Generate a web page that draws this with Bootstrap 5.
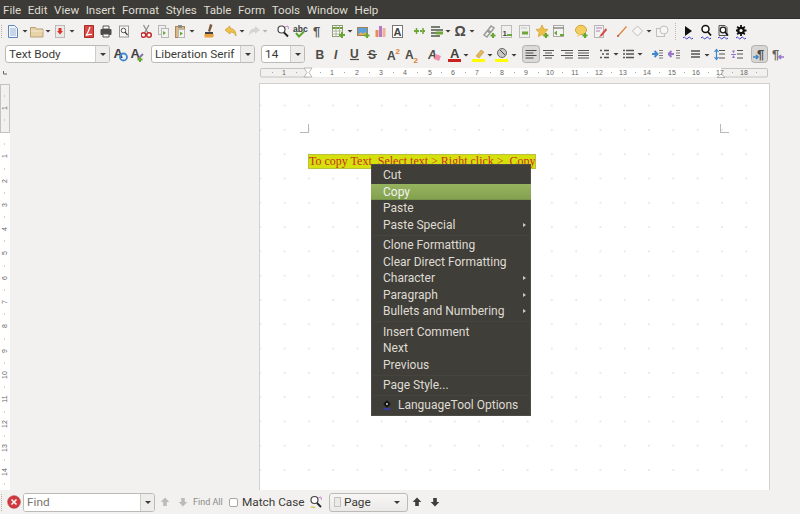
<!DOCTYPE html>
<html lang="en">
<head>
<meta charset="utf-8">
<title>Writer</title>
<link href="https://cdn.jsdelivr.net/npm/bootstrap@5.3.0/dist/css/bootstrap.min.css" rel="stylesheet">
<style>
html,body{margin:0;height:514px;overflow:hidden;background:#f2f1f0;font-family:Roboto,"Noto Sans",sans-serif;color:#3c3b37}
svg{display:block;flex:none}
svg text{font-family:"Liberation Sans",sans-serif}
.appbar{height:19px;background:#3c3b37;color:#dfdbd2;font-size:11.6px;line-height:20px;padding-left:3px;gap:6.6px;box-shadow:inset 0 -1px #2f2e2a}
.appbar span{display:block}
.tb1{height:25px}
.tb2{height:21px}
.tbi{display:flex;padding:0;border:0;background:none;border-radius:0}
.cmb{height:18px;margin-top:1px;border:1px solid #bcbab6;border-radius:3px;background:#fff;font-size:11.8px;line-height:16px;color:#3c3b37;flex:none;overflow:hidden}
.cmb-t{flex:1;padding-left:3px;white-space:nowrap}
.cmb-a{width:14px;background:#eeedeb;border-left:1px solid #cfcdc9;position:relative}
.cmb-a::after,.pgc-a::after{content:"";position:absolute;left:4px;top:7px;border:3px solid transparent;border-top:3px solid #3c3b37;border-bottom:0}
.w-style{width:105px;margin-left:5px}
.w-font{width:104px}
.w-size{width:44px;margin-left:6px}
.rulerrow{height:16px}
.work{height:409px;position:relative;overflow:hidden}
.vrul{margin-top:3px}
.sheet{position:relative;width:511px;height:408px;margin:2px 0 0 249px;background-color:#fff;border:1px solid #d3d1cd;border-bottom:0;background-image:radial-gradient(circle at 1px 1px,#e9e9e9 .7px,transparent 1px);background-size:24.3px 24.3px;background-position:23.6px 20.6px}
.crop{position:absolute;width:9px;height:9px;top:40px;border-bottom:1px solid #b8b8b8}
.crop-l{left:40px;border-right:1px solid #b8b8b8}
.crop-r{left:460px;border-left:1px solid #b8b8b8}
.doc-line{position:absolute;left:48px;top:70px;width:228px;height:15px;background:#d5e00c;border:1px solid #b9c23a;color:#c9301e;font:12px/13px "Liberation Serif",serif;white-space:pre;overflow:hidden}
.ctx.dropdown-menu{display:block;position:absolute;left:111px;top:80px;width:157px;height:252px;margin:0;padding:3px 0 0;border:0;border-radius:0;background:#3f3e39;box-shadow:0 0 0 1px #4e4d47 inset;font-size:12px;color:#dfdbd2}
.ctx .dropdown-item{height:16.6px;line-height:16px;padding:0 0 0 12px;color:#dfdbd2;position:relative;background:none;white-space:nowrap}
.ctx .dropdown-item.hot{background:linear-gradient(#96b35f,#82a14f);color:#f2f1f0;box-shadow:0 -1px #77934a inset}
.ctx .dropdown-divider{margin:1.3px 0;height:1px;border:0;background:#45443f;opacity:1}
.sub::after{content:"";position:absolute;right:5px;top:6px;border:2.5px solid transparent;border-left:3px solid #cfcbc2;border-right:0}
.lt{display:flex;align-items:center;gap:7px}
.cursor{position:absolute;left:163px;top:110px}
.findbar{height:24px;position:relative;font-size:11.8px;color:#3c3b37}
.fnd{width:132px;height:19px;margin:3px 0 0 0;border:1px solid #bcbab6;border-radius:3px;background:#fff;overflow:hidden;flex:none}
.fnd input.form-control{flex:1;min-width:0;height:17px;padding:0 0 0 3px;border:0;border-radius:0;font-size:11.8px;background:#fff;font-family:Roboto,sans-serif}
.fnd input::placeholder{color:#77756f;opacity:1}
.fnd .cmb-a{width:14px}
.fall{width:36px;font-size:9px;line-height:24px;color:#8c8a85;flex:none}
.chk.form-check-input{width:9px;height:9px;margin:8px 4px 0 0;border:1px solid #a8a6a2;border-radius:2px;flex:none}
.mc{width:68px;line-height:24px;flex:none}
.pgc{width:79px;height:19px;margin-top:3px;border:1px solid #bcbab6;border-radius:3px;background:linear-gradient(#f7f6f5,#ebeae8);position:relative;line-height:17px;padding-left:14px;flex:none}
.pgc-a{position:absolute;right:10px;top:0;width:0;height:17px}
.pgc-a::after{left:-3px}
.pgc i{position:absolute;left:4px;top:3px;width:7px;height:10px;background:#eceae6;border:1px solid #c4c2be}
</style>
</head>
<body>
<svg width="0" height="0" style="position:absolute"><defs><path id="ar" d="M-2.5 11h5l-2.5 2.6z" fill="#3c3b37"/><path id="arg" d="M-2.5 11h5l-2.5 2.6z" fill="#b5b3af"/></defs></svg>

<div class="appbar d-flex">
<span>File</span><span>Edit</span><span>View</span><span>Insert</span><span>Format</span><span>Styles</span><span>Table</span><span>Form</span><span>Tools</span><span>Window</span><span>Help</span>
</div>

<div class="tb1 d-flex">
<svg width="8" height="25" viewBox="0 0 8 25"><path d="M1.500 6v13" stroke="#b0aeaa" stroke-dasharray="1 1"/></svg>
<button class="btn tbi" aria-label="New"><svg width="22" height="25" viewBox="8 0 22 25"><path d="M8.500 6.500h6l3 3v9h-9z" fill="#f2f6fb" stroke="#5d86bb"/><path d="M10 10h6M10 12h6M10 14h6M10 16h6" stroke="#9db4d2"/><use href="#ar" x="25"/></svg></button>
<button class="btn tbi" aria-label="Open"><svg width="25" height="25" viewBox="30 0 25 25"><path d="M30.500 8.500h5l1 1.500h6.500v8h-12.500z" fill="#e7d3a8" stroke="#b9a374"/><path d="M31 12h12" stroke="#f3e8cf"/><use href="#ar" x="48"/></svg></button>
<button class="btn tbi" aria-label="Save"><svg width="29" height="25" viewBox="55 0 29 25"><rect x="55.500" y="6.500" width="9" height="12" fill="#eceae8" stroke="#bdbab6"/><path d="M58.500 9h3v3h1.500l-3 3.500-3-3.500h1.500z" fill="#d8322d"/><use href="#ar" x="72"/></svg></button>
<button class="btn tbi" aria-label="PDF"><svg width="16" height="25" viewBox="84 0 16 25"><path d="M84.500 6.500h9v12h-9z" fill="#d94a45" stroke="#a92c28"/><path d="M90 8c-1 3-2 6-4 8.500 2-1 4-1.500 6-1" fill="none" stroke="#fff" stroke-width="1.200"/></svg></button>
<button class="btn tbi" aria-label="Print"><svg width="19" height="25" viewBox="100 0 19 25"><path d="M103 7h6v3h-6z" fill="#fff" stroke="#555"/><rect x="100.500" y="10" width="11" height="6" rx="1" fill="#4a4a4a"/><path d="M103 15h6v3h-6z" fill="#fff" stroke="#555"/></svg></button>
<button class="btn tbi" aria-label="Preview"><svg width="22" height="25" viewBox="119 0 22 25"><rect x="119.500" y="7" width="9" height="11" fill="#f8f8f8" stroke="#9a9a9a"/><circle cx="123.500" cy="11.500" r="2.300" fill="none" stroke="#555"/><path d="M125 13l2.500 3" stroke="#444" stroke-width="1.300"/></svg></button>
<button class="btn tbi" aria-label="Cut"><svg width="17" height="25" viewBox="141 0 17 25"><path d="M143.500 6l4.500 8M149 6l-4.500 8" stroke="#8b8b8b" stroke-width="1.200"/><circle cx="143.500" cy="16" r="2.300" fill="#fff" stroke="#c02d2a" stroke-width="1.500"/><circle cx="149" cy="16" r="2.300" fill="#fff" stroke="#c02d2a" stroke-width="1.500"/></svg></button>
<button class="btn tbi" aria-label="Copy"><svg width="17" height="25" viewBox="158 0 17 25"><rect x="158.500" y="6.500" width="7" height="9" fill="#eee" stroke="#b8b8b4"/><rect x="161.500" y="9.500" width="7" height="9" fill="#f2f2f0" stroke="#b8b8b4"/><path d="M163 12v4l3-2z" fill="#6fa63a"/></svg></button>
<button class="btn tbi" aria-label="Paste"><svg width="28" height="25" viewBox="175 0 28 25"><rect x="175.500" y="7.500" width="9" height="11" fill="#d9b886" stroke="#a68a5c"/><rect x="178" y="6" width="4" height="3" fill="#8d8d88"/><rect x="178.500" y="10.500" width="6" height="8" fill="#f3f3f1" stroke="#b8b8b4"/><path d="M180 12.500v4l3-2z" fill="#6fa63a"/><use href="#ar" x="192"/></svg></button>
<button class="btn tbi" aria-label="Clone"><svg width="21" height="25" viewBox="203 0 21 25"><path d="M210 5l2.500 1-2.500 7-2-1z" fill="#7a5a36"/><path d="M205 13h8v2h-8z" fill="#444"/><path d="M204.500 15h9c.5 2-.5 3.500-1 3.500h-8z" fill="#e9a13b"/></svg></button>
<button class="btn tbi" aria-label="Undo"><svg width="24" height="25" viewBox="224 0 24 25"><path d="M225 11l5-4v2.600c4 0 6 2.400 6 7.400-1.500-3-3-4-6-4V15z" fill="#f0c24c" stroke="#c79a2c" stroke-width=".7"/><use href="#ar" x="242"/></svg></button>
<button class="btn tbi" aria-label="Redo"><svg width="29" height="25" viewBox="248 0 29 25"><path d="M260 11l-5-4v2.600c-4 0-6 2.400-6 7.400 1.500-3 3-4 6-4V15z" fill="#d5d4d1"/><use href="#arg" x="265"/></svg></button>
<button class="btn tbi" aria-label="Find"><svg width="16" height="25" viewBox="277 0 16 25"><circle cx="281.500" cy="10.500" r="3.500" fill="#fff" stroke="#444" stroke-width="1.200"/><path d="M284 13.500l4 4" stroke="#222" stroke-width="1.800"/><path d="M285 8l3-1 .5 3" stroke="#c98ad0" fill="none"/></svg></button>
<button class="btn tbi" aria-label="Spelling"><svg width="20" height="25" viewBox="293 0 20 25"><text x="293" y="12.500" font-size="8.500" font-weight="700" fill="#38403a">abc</text><path d="M296 14l3 3.500 5-5" fill="none" stroke="#5ea52e" stroke-width="2"/></svg></button>
<button class="btn tbi" aria-label="Marks"><svg width="19" height="25" viewBox="313 0 19 25"><text x="313" y="17" font-size="13" font-weight="700" fill="#55544f">¶</text></svg></button>
<button class="btn tbi" aria-label="Table"><svg width="25" height="25" viewBox="332 0 25 25"><rect x="332.500" y="6.500" width="10" height="11" fill="#fff" stroke="#8d9b78"/><path d="M332 9h11" stroke="#6d9c3a" stroke-width="2"/><path d="M336 7v11M339.500 7v11M332 12h11M332 15h11" stroke="#a9b49a"/><path d="M342 13v6M339 16h6" stroke="#66a632" stroke-width="2"/><use href="#ar" x="350"/></svg></button>
<button class="btn tbi" aria-label="Image"><svg width="18" height="25" viewBox="357 0 18 25"><rect x="357.500" y="8.500" width="10" height="8" fill="#5ca0dc" stroke="#a18150"/><path d="M358 16l3-3 2 2 2-2 2 3z" fill="#e8b24c"/><path d="M367 14v5M364.500 16.500h5" stroke="#66a632" stroke-width="2"/></svg></button>
<button class="btn tbi" aria-label="Chart"><svg width="17" height="25" viewBox="375 0 17 25"><rect x="375.500" y="11" width="3" height="7" fill="#e98b5b"/><rect x="379" y="7" width="3" height="11" fill="#b179c8"/><rect x="382.500" y="9" width="3" height="9" fill="#ecb39a"/></svg></button>
<button class="btn tbi" aria-label="Text box"><svg width="21" height="25" viewBox="392 0 21 25"><rect x="392.500" y="6.500" width="10" height="12" fill="#fff" stroke="#777"/><text x="393.500" y="16.500" font-size="11" font-weight="700" fill="#444">A</text></svg></button>
<button class="btn tbi" aria-label="Line"><svg width="18" height="25" viewBox="413 0 18 25"><path d="M414 12h12" stroke="#72a83f" stroke-width="2" stroke-dasharray="2 1"/><path d="M416.500 9v6M423 9v6" stroke="#66a632" stroke-width="1.500"/></svg></button>
<button class="btn tbi" aria-label="Field"><svg width="24" height="25" viewBox="431 0 24 25"><path d="M431 8h9M431 11h12M431 14h12M431 17h9" stroke="#4f5a45" stroke-width="1.400"/><path d="M436 14h7" stroke="#6fa63a" stroke-width="3"/><use href="#ar" x="448"/></svg></button>
<button class="btn tbi" aria-label="Symbol"><svg width="28" height="25" viewBox="455 0 28 25"><text x="454.500" y="17" font-size="14" font-weight="700" fill="#4c4b47">Ω</text><use href="#ar" x="472"/></svg></button>
<button class="btn tbi" aria-label="Hyperlink"><svg width="18" height="25" viewBox="483 0 18 25"><path d="M484 16l3 2 3-4-3-2zM488 11l3 2 3-4-3-2z" fill="none" stroke="#9a9a96" stroke-width="1.500"/><path d="M493 14v5M490.500 16.500h5" stroke="#66a632" stroke-width="2"/></svg></button>
<button class="btn tbi" aria-label="Footnote"><svg width="18" height="25" viewBox="501 0 18 25"><rect x="501.500" y="6.500" width="10" height="12" fill="#f0f0ee" stroke="#bcbcb8"/><text x="502.500" y="17" font-size="8" font-weight="700" fill="#444">1</text><path d="M507 16h5" stroke="#6fa63a" stroke-width="2"/></svg></button>
<button class="btn tbi" aria-label="Endnote"><svg width="17" height="25" viewBox="519 0 17 25"><rect x="519.500" y="6.500" width="10" height="12" fill="#f0f0ee" stroke="#bcbcb8"/><path d="M522 14h6" stroke="#6fa63a" stroke-width="3"/><path d="M521 9h6" stroke="#c5c5c1"/></svg></button>
<button class="btn tbi" aria-label="Bookmark"><svg width="17" height="25" viewBox="536 0 17 25"><path d="M542 6l1.800 4 4.200.5-3.100 2.900.8 4.300-3.700-2.200-3.700 2.200.8-4.300-3.100-2.900 4.200-.5z" fill="#eec04a" stroke="#cd9e2e" stroke-width=".7"/><path d="M546 14v5M543.500 16.500h5" stroke="#66a632" stroke-width="2"/></svg></button>
<button class="btn tbi" aria-label="Cross-reference"><svg width="22" height="25" viewBox="553 0 22 25"><rect x="553.500" y="6.500" width="10" height="11" fill="#f4f4f2" stroke="#a9a9a5"/><path d="M553 9h11" stroke="#8d8d88" stroke-width="1.500"/><path d="M557 11.500v5l-3-2.500z" fill="#6fa63a"/><path d="M560 16h4" stroke="#6fa63a" stroke-width="2"/></svg></button>
<button class="btn tbi" aria-label="Comment"><svg width="19" height="25" viewBox="575 0 19 25"><ellipse cx="581" cy="11" rx="5.500" ry="4.700" fill="#f3cf63" stroke="#d1a73c"/><path d="M578 15l-1 3 4-2.500z" fill="#f3cf63"/><path d="M585 14v5M582.500 16.500h5" stroke="#66a632" stroke-width="2"/></svg></button>
<button class="btn tbi" aria-label="Track changes"><svg width="23" height="25" viewBox="594 0 23 25"><rect x="594.500" y="6.500" width="9" height="12" fill="#f2f2f0" stroke="#b6b6b2"/><path d="M596 9h6M596 12h4" stroke="#b779c0"/><path d="M606 9l-5 6-2 3 3-1 5-6z" fill="#d24a45"/></svg></button>
<button class="btn tbi" aria-label="Draw line"><svg width="15" height="25" viewBox="617 0 15 25"><path d="M618 17l8.500-9.500" stroke="#e0823a" stroke-width="1.200"/><circle cx="618" cy="17" r=".9" fill="#a44"/></svg></button>
<button class="btn tbi" aria-label="Shapes"><svg width="24" height="25" viewBox="632 0 24 25"><path d="M637.500 7l5 5-5 5-5-5z" fill="#f6f6f4" stroke="#bdbdb9"/><use href="#ar" x="649"/></svg></button>
<button class="btn tbi" aria-label="Draw functions"><svg width="19" height="25" viewBox="656 0 19 25"><rect x="656.500" y="9.500" width="8" height="8" fill="#f3f3f1" stroke="#c0c0bc"/><circle cx="664" cy="11" r="4" fill="#f6f6f4" stroke="#c0c0bc"/></svg></button>
<svg width="8" height="25" viewBox="675 0 8 25"><path d="M675.500 4v17" stroke="#bbb9b5" stroke-dasharray="1 1"/></svg>
<button class="btn tbi" aria-label="Run"><svg width="18" height="25" viewBox="683 0 18 25"><path d="M685 7l7 5-7 5z" fill="#111"/><path d="M683 19q1.200-2 2.500 0t2.500 0 2.500 0 2.500 0" fill="none" stroke="#3f3fd0"/></svg></button>
<button class="btn tbi" aria-label="Search"><svg width="17" height="25" viewBox="701 0 17 25"><circle cx="705.500" cy="10" r="3.500" fill="#fff" stroke="#111" stroke-width="1.500"/><path d="M708 13l3 3.500" stroke="#111" stroke-width="1.800"/><path d="M701 19q1.200-2 2.500 0t2.500 0 2.500 0 2.500 0" fill="none" stroke="#3f3fd0"/></svg></button>
<button class="btn tbi" aria-label="Check"><svg width="18" height="25" viewBox="718 0 18 25"><path d="M719 6.500h6l2 2v8h-8z" fill="#eee" stroke="#555"/><circle cx="723" cy="11" r="2.800" fill="#fff" stroke="#222" stroke-width="1.300"/><path d="M725 13l3 3.500" stroke="#111" stroke-width="1.600"/><path d="M718 19q1.200-2 2.500 0t2.500 0 2.500 0 2.500 0" fill="none" stroke="#3f3fd0"/></svg></button>
<button class="btn tbi" aria-label="Options"><svg width="20" height="25" viewBox="736 0 20 25"><path d="M741 6v11M735.500 11.500h11M737.200 7.700l7.600 7.600M744.800 7.700l-7.600 7.600" stroke="#111" stroke-width="1.800"/><circle cx="741" cy="11.500" r="3.800" fill="#111"/><circle cx="741" cy="11.500" r="1.600" fill="#fff"/><path d="M736 19q1.200-2 2.500 0t2.500 0 2.500 0 2.500 0" fill="none" stroke="#3f3fd0"/></svg></button>
</div>

<div class="tb2 d-flex">
<div class="cmb w-style d-flex"><span class="cmb-t">Text Body</span><span class="cmb-a"></span></div>
<svg width="41" height="21" viewBox="110 0 41 21"><text x="113.500" y="14" font-size="13" font-weight="700" fill="#3f3f3f">A</text><circle cx="123.500" cy="13" r="3.500" fill="none" stroke="#3f88cc" stroke-width="1.800"/><text x="130.500" y="14" font-size="13" font-weight="700" fill="#3f3f3f">A</text><path d="M138 15l5-5" stroke="#8a6ea8" stroke-width="2"/><path d="M140 13v5M137.500 15.500h5" stroke="#66a632" stroke-width="2"/></svg>
<div class="cmb w-font d-flex"><span class="cmb-t">Liberation Serif</span><span class="cmb-a"></span></div>
<div class="cmb w-size d-flex"><span class="cmb-t">14</span><span class="cmb-a"></span></div>
<svg width="9" height="21" viewBox="305 0 9 21"></svg>
<svg width="73" height="21" viewBox="314 0 73 21"><text x="315.500" y="14.500" font-size="12" font-weight="700" fill="#4c4b47">B</text><text x="334" y="14.500" font-size="12" font-weight="700" font-style="italic" fill="#4c4b47">I</text><text x="350" y="13.500" font-size="12" font-weight="700" fill="#4c4b47">U</text><path d="M350 15.500h9" stroke="#4c4b47" stroke-width="1.200"/><text x="368" y="14.500" font-size="12" font-weight="700" fill="#4c4b47">S</text><path d="M367 10.500h10" stroke="#4c4b47"/></svg>
<svg width="18" height="21" viewBox="387 0 18 21"><text x="387" y="16" font-size="12" font-weight="700" fill="#4c4b47">A</text><text x="395.500" y="10" font-size="8" font-weight="700" fill="#e0812d">2</text></svg>
<svg width="23" height="21" viewBox="405 0 23 21"><text x="405" y="15" font-size="12" font-weight="700" fill="#4c4b47">A</text><text x="413.500" y="18.500" font-size="8" font-weight="700" fill="#e0812d">2</text></svg>
<svg width="20" height="21" viewBox="428 0 20 21"><text x="428" y="15" font-size="12" font-weight="700" font-style="italic" fill="#4c4b47">A</text><path d="M436 10l5 2-2 5-5-2z" fill="#f08cb0"/></svg>
<svg width="24" height="21" viewBox="448 0 24 21"><text x="450" y="14" font-size="13" font-weight="700" fill="#3f3e3a">A</text><rect x="448" y="15" width="13" height="3" fill="#c9211e"/><use href="#ar" x="466" y="-1"/></svg>
<svg width="23" height="21" viewBox="472 0 23 21"><path d="M476 12l5-6 3 2-5 6z" fill="#e5b55a" stroke="#b58b3a" stroke-width=".5"/><rect x="472" y="15" width="13" height="3" fill="#ffff00"/><use href="#ar" x="490" y="-1"/></svg>
<svg width="27" height="21" viewBox="495 0 27 21"><circle cx="502" cy="9" r="4.500" fill="#c9c8c4" stroke="#666"/><path d="M500 6l5 5" stroke="#444"/><rect x="495" y="15" width="13" height="3" fill="#ffff00"/><use href="#ar" x="514" y="-1"/></svg>
<svg width="20" height="21" viewBox="522 0 20 21"><rect x="522.500" y="1.500" width="17" height="17" rx="3" fill="#dcdad7" stroke="#b3b1ad"/><path d="M525.500 6.500h11M525.500 9h8M525.500 11.500h11M525.500 14h8" stroke="#4c4b47" stroke-width="1.200"/></svg>
<svg width="18" height="21" viewBox="542 0 18 21"><path d="M543 6.500h11M545 9h7M543 11.500h11M545 14h7" stroke="#55544f" stroke-width="1.200"/></svg>
<svg width="18" height="21" viewBox="560 0 18 21"><path d="M561 6.500h12M565 9h8M561 11.500h12M565 14h8" stroke="#55544f" stroke-width="1.200"/></svg>
<svg width="21" height="21" viewBox="578 0 21 21"><path d="M578 6.500h11M578 9h11M578 11.500h11M578 14h11" stroke="#55544f" stroke-width="1.200"/></svg>
<svg width="23" height="21" viewBox="599 0 23 21"><path d="M600 6.500h2M604 6.500h5M602 10h2M606 10h3M600 13.500h2M604 13.500h5" stroke="#55544f" stroke-width="1.400"/><use href="#ar" x="616" y="-2"/></svg>
<svg width="29" height="21" viewBox="622 0 29 21"><path d="M623 6.500h2M626 6.500h8M623 10h2M626 10h8M623 13.500h2M626 13.500h8" stroke="#55544f" stroke-width="1.400"/><use href="#ar" x="640" y="-2"/></svg>
<svg width="17" height="21" viewBox="651 0 17 21"><path d="M652 10h5m-2.500-3l3 3-3 3" fill="none" stroke="#3f88cc" stroke-width="2"/><path d="M659 6.500h4M659 9h4M659 11.500h4M659 14h4" stroke="#7a7975"/></svg>
<svg width="23" height="21" viewBox="668 0 23 21"><path d="M674 10h-5m2.500-3l-3 3 3 3" fill="none" stroke="#9a76c8" stroke-width="2"/><path d="M676 6.500h4M676 9h4M676 11.500h4M676 14h4" stroke="#7a7975"/></svg>
<svg width="23" height="21" viewBox="691 0 23 21"><path d="M691 7h9M691 10h9M691 13h9" stroke="#55544f" stroke-width="1.500"/><use href="#ar" x="707" y="-1"/></svg>
<svg width="17" height="21" viewBox="714 0 17 21"><path d="M716.500 6v9M714.500 8l2-2.500 2 2.500M714.500 13l2 2.500 2-2.500" fill="none" stroke="#3f88cc" stroke-width="1.200"/><path d="M719 6.500h6M719 10h6M719 14h6" stroke="#55544f" stroke-width="1.200"/></svg>
<svg width="20" height="21" viewBox="731 0 20 21"><path d="M732 6.500h3l-1.500 3zM732 14h3l-1.500-3z" fill="#9a76c8"/><path d="M731 10.500h5" stroke="#9a76c8"/><path d="M737 6.500h6M737 10h6M737 14h6" stroke="#55544f" stroke-width="1.200"/></svg>
<svg width="21" height="21" viewBox="751 0 21 21"><rect x="751.500" y="1.500" width="16" height="17" rx="3" fill="#d8d6d3" stroke="#b3b1ad"/><text x="757" y="15" font-size="13" font-weight="700" fill="#4c4b47">¶</text><path d="M753 13h5m-2-2l2 2-2 2" fill="none" stroke="#3f88cc" stroke-width="1.700"/></svg>
<svg width="28" height="21" viewBox="772 0 28 21"><text x="772" y="15" font-size="13" font-weight="700" fill="#66655f">¶</text><path d="M784 13h-5m2-2l-2 2 2 2" fill="none" stroke="#9a76c8" stroke-width="1.700"/></svg>
</div>

<div class="rulerrow">
<svg width="800" height="16" viewBox="0 65 800 16" font-size="7" fill="#66655f"><path d="M3.500 71v3H7" fill="none" stroke="#66655f"/><rect x="260.500" y="68.500" width="507" height="8.500" fill="#f2f1f0" stroke="#c5c3bf" rx="1"/><rect x="308" y="68" width="413" height="9.500" fill="#fff"/><path d="M304 68h8l-3 4.500 3 4.500h-8l3-4.500z" fill="#fff" stroke="#9f9d99" stroke-width=".7"/><path d="M717 77.500h8l-4-3.500z" fill="#fff" stroke="#9f9d99" stroke-width=".7"/>
<g text-anchor="middle"><text x="284" y="75">1</text><text x="332" y="75">1</text><text x="357" y="75">2</text><text x="381" y="75">3</text><text x="405" y="75">4</text><text x="430" y="75">5</text><text x="453" y="75">6</text><text x="477" y="75">7</text><text x="502" y="75">8</text><text x="526" y="75">9</text><text x="550" y="75">10</text><text x="575" y="75">11</text><text x="599" y="75">12</text><text x="623" y="75">13</text><text x="647" y="75">14</text><text x="672" y="75">15</text><text x="696" y="75">16</text><text x="720" y="75">17</text><text x="744" y="75">18</text></g>
<path d="M272.500 72v1M296.500 72v1M320.500 72v1M344.500 72v1M369.500 72v1M393.500 72v1M417.500 72v1M441.500 72v1M465.500 72v1M490.500 72v1M514.500 72v1M538.500 72v1M562.500 72v1M587.500 72v1M611.500 72v1M635.500 72v1M659.500 72v1M684.500 72v1M708.500 72v1M732.500 72v1M756.500 72v1" stroke="#aaa8a4"/></svg>
</div>

<div class="work d-flex">
<svg class="vrul" width="10" height="406" viewBox="0 84 10 406" font-size="7" fill="#66655f"><rect x="0" y="132" width="10" height="358" fill="#fff"/><rect x=".5" y="84.500" width="9" height="48" fill="#f2f1f0" stroke="#c5c3bf"/>
<g text-anchor="middle"><text transform="translate(7 108) rotate(-90)">1</text><text transform="translate(7 156) rotate(-90)">1</text><text transform="translate(7 181) rotate(-90)">2</text><text transform="translate(7 205) rotate(-90)">3</text><text transform="translate(7 229) rotate(-90)">4</text><text transform="translate(7 253) rotate(-90)">5</text><text transform="translate(7 278) rotate(-90)">6</text><text transform="translate(7 302) rotate(-90)">7</text><text transform="translate(7 326) rotate(-90)">8</text><text transform="translate(7 351) rotate(-90)">9</text><text transform="translate(7 375) rotate(-90)">10</text><text transform="translate(7 399) rotate(-90)">11</text><text transform="translate(7 424) rotate(-90)">12</text><text transform="translate(7 448) rotate(-90)">13</text><text transform="translate(7 472) rotate(-90)">14</text></g>
<path d="M4 96h1M4 120h1M4 144h1M4 169h1M4 193h1M4 217h1M4 241h1M4 266h1M4 290h1M4 314h1M4 339h1M4 363h1M4 387h1M4 412h1M4 436h1M4 460h1M4 484h1" stroke="#aaa8a4"/></svg>
<div class="sheet">
<i class="crop crop-l"></i><i class="crop crop-r"></i>
<div class="doc-line">To copy Text, Select text &gt; Right click &gt;  Copy</div>
<div class="ctx dropdown-menu">
<a class="dropdown-item">Cut</a>
<a class="dropdown-item hot">Copy</a>
<a class="dropdown-item">Paste</a>
<a class="dropdown-item sub">Paste Special</a>
<hr class="dropdown-divider">
<a class="dropdown-item">Clone Formatting</a>
<a class="dropdown-item">Clear Direct Formatting</a>
<a class="dropdown-item sub">Character</a>
<a class="dropdown-item sub">Paragraph</a>
<a class="dropdown-item sub">Bullets and Numbering</a>
<hr class="dropdown-divider">
<a class="dropdown-item">Insert Comment</a>
<a class="dropdown-item">Next</a>
<a class="dropdown-item">Previous</a>
<hr class="dropdown-divider">
<a class="dropdown-item">Page Style...</a>
<hr class="dropdown-divider">
<a class="dropdown-item lt"><svg width="8" height="10" viewBox="0 0 8 10"><path d="M4 .5v7M.5 4h7" stroke="#111"/><circle cx="4" cy="4" r="2.700" fill="#111"/><circle cx="4" cy="4" r="1" fill="#ddd"/><path d="M.5 9h7" stroke="#3a3ad0" stroke-width="1.300"/></svg>LanguageTool Options</a>
</div>
<svg class="cursor" width="9" height="13" viewBox="0 0 9 13"><path d="M1 1v9l2.200-2 1.500 3.500 1.500-.7-1.500-3.300H8z" fill="#fff" stroke="#333" stroke-width=".7"/></svg>
</div>
</div>

<div class="findbar d-flex">
<svg width="23" height="24" viewBox="0 0 23 24"><path d="M1.500 4v17" stroke="#b0aeaa" stroke-dasharray="1 1"/><circle cx="14" cy="12" r="6.300" fill="#d13a3f" stroke="#b4272c" stroke-width=".6"/><path d="M11.500 9.500l5 5M16.500 9.500l-5 5" stroke="#fff" stroke-width="1.500"/></svg>
<div class="fnd d-flex"><input class="form-control" type="text" placeholder="Find" aria-label="Find"><span class="cmb-a"></span></div>
<svg width="38" height="24" viewBox="155 0 38 24"><path d="M165 7.500l4.300 4.500h-2.500v4h-3.600v-4h-2.500z" fill="#bdbbb7"/><path d="M183 16.500l4.300-4.500h-2.500v-4h-3.600v4h-2.500z" fill="#bdbbb7"/></svg>
<span class="fall">Find All</span>
<input class="form-check-input chk" type="checkbox" aria-label="Match Case">
<span class="mc">Match Case</span>
<svg width="19" height="24" viewBox="310 0 19 24"><circle cx="314.500" cy="10" r="3.500" fill="#fff" stroke="#444" stroke-width="1.200"/><path d="M317 13l4 4" stroke="#222" stroke-width="1.800"/><path d="M318 8l3-1 .5 3" stroke="#c98ad0" fill="none"/><path d="M311 17l4 .5" stroke="#d8c84a" stroke-width="1.500"/></svg>
<div class="pgc">Page<i></i><span class="pgc-a"></span></div>
<svg width="40" height="24" viewBox="408 0 40 24"><path d="M417 7.500l4.300 4.500h-2.500v4h-3.600v-4h-2.500z" fill="#3f3e3a"/><path d="M435 16.500l4.300-4.500h-2.500v-4h-3.600v4h-2.500z" fill="#3f3e3a"/></svg>
</div>
<script src="https://cdn.jsdelivr.net/npm/bootstrap@5.3.0/dist/js/bootstrap.bundle.min.js"></script>
</body>
</html>
